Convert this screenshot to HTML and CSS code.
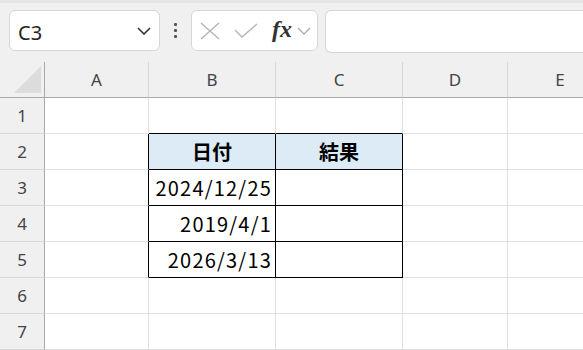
FILE: index.html
```html
<!DOCTYPE html>
<html lang="ja">
<head>
  <meta charset="UTF-8" />
  <title>Excel</title>
  <link rel="stylesheet" href="styles.css">
</head>
<body>
  <!-- 数式バー -->
  <div class="toolbar">
    <div class="namebox">
      <span class="ref">C3</span>
      <svg class="chev" width="14" height="8" viewBox="0 0 14 8"><path d="M1 1 L7 7 L13 1" fill="none" stroke="#333" stroke-width="1.6"/></svg>
    </div>
    <div class="dots"><i></i><i></i><i></i></div>
    <div class="fbtns">
      <svg width="20" height="18" viewBox="0 0 20 18"><path d="M1 1 L19 17 M19 1 L1 17" stroke="#b4b4b4" stroke-width="1.4" fill="none"/></svg>
      <svg width="24" height="16" viewBox="0 0 24 16"><path d="M1 7 L8 14 L23 1" stroke="#b4b4b4" stroke-width="1.4" fill="none"/></svg>
      <span class="fx">fx</span>
      <svg width="14" height="8" viewBox="0 0 14 8"><path d="M1 1 L7 7 L13 1" fill="none" stroke="#aaa" stroke-width="1.3"/></svg>
    </div>
    <div class="formula"></div>
  </div>

  <!-- シート -->
  <div class="sheet">
    <div class="corner"><span class="tri"></span></div>
    <div class="ch">A</div><div class="ch">B</div><div class="ch">C</div><div class="ch">D</div><div class="ch">E</div>

    <div class="rh">1</div>
    <div class="c"></div><div class="c top"></div><div class="c top"></div><div class="c"></div><div class="c"></div>

    <div class="rh">2</div>
    <div class="c left"></div><div class="c t hd">日付</div><div class="c t hd">結果</div><div class="c"></div><div class="c"></div>

    <div class="rh">3</div>
    <div class="c left"></div><div class="c t num">2024/12/25</div><div class="c t"></div><div class="c"></div><div class="c"></div>

    <div class="rh">4</div>
    <div class="c left"></div><div class="c t num">2019/4/1</div><div class="c t"></div><div class="c"></div><div class="c"></div>

    <div class="rh">5</div>
    <div class="c left"></div><div class="c t num">2026/3/13</div><div class="c t"></div><div class="c"></div><div class="c"></div>

    <div class="rh">6</div>
    <div class="c"></div><div class="c"></div><div class="c"></div><div class="c"></div><div class="c"></div>

    <div class="rh">7</div>
    <div class="c"></div><div class="c"></div><div class="c"></div><div class="c"></div><div class="c"></div>
  </div>
</body>
</html>
```

FILE: styles.css
```css
body {
  margin: 0;
  width: 583px;
  height: 350px;
  overflow: hidden;
  background: #fff;
  font-family: "Noto Sans", "Noto Sans CJK JP", sans-serif;
}

.toolbar {
  height: 62px;
  box-sizing: border-box;
  background: #f0f0f0;
  border-top: 3px solid #e5e5e5;
  padding: 7px 0 0 9px;
  display: flex;
  align-items: flex-start;
  overflow: hidden;
}

.namebox {
  width: 151px;
  height: 41px;
  box-sizing: border-box;
  background: #fff;
  border: 1px solid #d6d6d6;
  border-radius: 6px;
  display: flex;
  align-items: center;
  justify-content: space-between;
  padding: 0 8px 0 8px;
}

.ref {
  font-size: 20px;
  color: #222;
  padding-top: 3px;
}

.dots {
  width: 31px;
  height: 41px;
  display: flex;
  flex-direction: column;
  align-items: center;
  justify-content: center;
  gap: 3px;
}

.dots i {
  width: 3px;
  height: 3px;
  background: #555;
  border-radius: 1px;
}

.fbtns {
  width: 127px;
  height: 41px;
  box-sizing: border-box;
  background: #fff;
  border: 1px solid #d6d6d6;
  border-radius: 6px;
  display: flex;
  align-items: center;
  padding: 0 0 0 8px;
  gap: 14px;
}

.fbtns .fx {
  font-family: "Liberation Serif", serif;
  font-style: italic;
  font-weight: bold;
  font-size: 24px;
  color: #333;
  margin-right: -9px;
  padding-bottom: 3px;
}

.formula {
  flex: 1;
  height: 41px;
  margin-left: 7px;
  background: #fff;
  border: 1px solid #d6d6d6;
  border-right: none;
  border-radius: 6px 0 0 6px;
}

.sheet {
  width: 583px;
  overflow: hidden;
  display: grid;
  grid-template-columns: 45px 104px 127px 127px 105px 105px;
  grid-auto-rows: 36px;
}

.sheet > div {
  box-sizing: border-box;
  border-right: 1px solid #e0e0e0;
  border-bottom: 1px solid #e0e0e0;
}

.corner {
  background: #f0f0f0;
  position: relative;
}

.sheet > .corner {
  border-right: 1px solid #a9a9a9;
  border-bottom: 1px solid #a9a9a9;
}

.tri {
  position: absolute;
  right: 3px;
  bottom: 4px;
  width: 0;
  height: 0;
  border-left: 27px solid transparent;
  border-bottom: 27px solid #dcdcdc;
}

.sheet > .ch {
  background: #f0f0f0;
  border-right: 1px solid #d8d8d8;
  border-bottom: 1px solid #a9a9a9;
  display: flex;
  align-items: center;
  justify-content: center;
  font-size: 17px;
  color: #444;
}

.sheet > .rh {
  background: #f0f0f0;
  border-right: 1px solid #a9a9a9;
  border-bottom: 1px solid #d8d8d8;
  display: flex;
  align-items: center;
  justify-content: center;
  font-size: 17px;
  color: #444;
}

.sheet > .top {
  border-bottom: 1px solid #000;
}

.sheet > .left {
  border-right: 1px solid #000;
}

.sheet > .t {
  border-right: 1px solid #000;
  border-bottom: 1px solid #000;
  font-family: "Noto Sans CJK JP", sans-serif;
  font-size: 20px;
  color: #000;
  display: flex;
  align-items: center;
}

.hd {
  background: #ddebf7;
  font-weight: bold;
  justify-content: center;
}

.num {
  justify-content: flex-end;
  letter-spacing: 1.2px;
  padding-right: 3px;
}
```
